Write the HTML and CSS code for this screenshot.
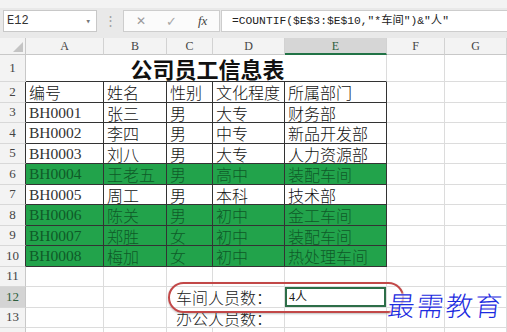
FILE: index.html
```html
<!DOCTYPE html>
<html lang="zh-CN">
  <head>
    <meta charset="UTF-8" />
    <title>公司员工信息表</title>
    <link rel="stylesheet" href="styles.css">
  </head>
  <body>
    <div class="toolbar">
      <div class="namebox"><span>E12</span><span class="arrow">▾</span></div>
      <div class="dots">⋮</div>
      <div class="fbtns"><span class="x">✕</span><span class="ok">✓</span><span class="fx">fx</span></div>
      <div class="formula">=COUNTIF($E$3:$E$10,"*车间")&amp;"人"</div>
    </div>

    <div class="sheet">
      <div class="corner"><svg width="10" height="10" viewBox="0 0 10 10"><path d="M10 0 L10 10 L0 10 Z" fill="#c4c4c4"/></svg></div>
      <div class="ch">A</div><div class="ch">B</div><div class="ch">C</div><div class="ch">D</div>
      <div class="ch on">E</div><div class="ch">F</div><div class="ch">G</div>

      <div class="rh">1</div><div class="c title">公司员工信息表</div><div class="c"></div><div class="c"></div>

      <div class="rh b">2</div><div class="c d">编号</div><div class="c d">姓名</div><div class="c d">性别</div><div class="c d">文化程度</div><div class="c d">所属部门</div><div class="c"></div><div class="c"></div>
      <div class="rh b">3</div><div class="c d lat">BH0001</div><div class="c d">张三</div><div class="c d">男</div><div class="c d">大专</div><div class="c d">财务部</div><div class="c"></div><div class="c"></div>
      <div class="rh b">4</div><div class="c d lat">BH0002</div><div class="c d">李四</div><div class="c d">男</div><div class="c d">中专</div><div class="c d">新品开发部</div><div class="c"></div><div class="c"></div>
      <div class="rh b">5</div><div class="c d lat">BH0003</div><div class="c d">刘八</div><div class="c d">男</div><div class="c d">大专</div><div class="c d">人力资源部</div><div class="c"></div><div class="c"></div>
      <div class="rh b">6</div><div class="c d g lat">BH0004</div><div class="c d g">王老五</div><div class="c d g">男</div><div class="c d g">高中</div><div class="c d g">装配车间</div><div class="c"></div><div class="c"></div>
      <div class="rh b">7</div><div class="c d lat">BH0005</div><div class="c d">周工</div><div class="c d">男</div><div class="c d">本科</div><div class="c d">技术部</div><div class="c"></div><div class="c"></div>
      <div class="rh b">8</div><div class="c d g lat">BH0006</div><div class="c d g">陈关</div><div class="c d g">男</div><div class="c d g">初中</div><div class="c d g">金工车间</div><div class="c"></div><div class="c"></div>
      <div class="rh b">9</div><div class="c d g lat">BH0007</div><div class="c d g">郑胜</div><div class="c d g">女</div><div class="c d g">初中</div><div class="c d g">装配车间</div><div class="c"></div><div class="c"></div>
      <div class="rh b">10</div><div class="c d g lat">BH0008</div><div class="c d g">梅加</div><div class="c d g">女</div><div class="c d g">初中</div><div class="c d g">热处理车间</div><div class="c"></div><div class="c"></div>

      <div class="rh">11</div><div class="c"></div><div class="c"></div><div class="c"></div><div class="c"></div><div class="c"></div><div class="c"></div><div class="c"></div>
      <div class="rh on">12</div><div class="c"></div><div class="c"></div><div class="c label">车间人员数：</div><div class="c sel">4人</div><div class="c"></div><div class="c"></div>
      <div class="rh">13</div><div class="c"></div><div class="c"></div><div class="c label">办公人员数：</div><div class="c"></div><div class="c"></div><div class="c"></div>
      <div class="rh"></div><div class="c"></div><div class="c"></div><div class="c"></div><div class="c"></div><div class="c"></div><div class="c"></div><div class="c"></div>

      <div class="ring"></div>
      <div class="mark">最需教育</div>
    </div>
  </body>
</html>
```

FILE: styles.css
```css
body {
  margin: 0;
  width: 507px;
  height: 332px;
  overflow: hidden;
  background: #ececec;
  font-family: "Liberation Serif", "Noto Sans CJK SC", serif;
  color: #1a1a1a;
}
.toolbar {
  height: 38px;
  box-sizing: border-box;
  padding-top: 10px;
  display: flex;
  align-items: flex-start;
  background: linear-gradient(#f3f3f3 0, #f3f3f3 8px, #e9e9e9 8px);
}
.namebox {
  margin-left: 3px;
  width: 94px;
  height: 22px;
  box-sizing: border-box;
  padding: 0 5px 0 3px;
  background: white;
  border: 1px solid #c8c8c8;
  display: flex;
  align-items: center;
  justify-content: space-between;
  font-family: "Liberation Mono", monospace;
  font-size: 12px;
  color: #333;
}
.namebox .arrow {
  font-size: 9px;
  color: #777;
}
.dots {
  width: 26px;
  height: 22px;
  line-height: 22px;
  text-align: center;
  color: #a0a0a0;
  font-size: 13px;
}
.fbtns {
  width: 97px;
  height: 22px;
  box-sizing: border-box;
  background: #fbfbfb;
  border: 1px solid #cdcdcd;
  display: flex;
  align-items: center;
  font-family: "DejaVu Sans", sans-serif;
  color: #9a9a9a;
}
.fbtns .x {
  margin-left: 12px;
  font-size: 12px;
}
.fbtns .ok {
  margin-left: 20px;
  font-size: 13px;
  color: #a8a8a8;
}
.fbtns .fx {
  margin-left: 21px;
  font-family: "Liberation Serif", serif;
  font-style: italic;
  font-size: 13px;
  color: #444;
}
.formula {
  flex: 1;
  margin-left: 1px;
  height: 22px;
  box-sizing: border-box;
  padding-left: 10px;
  line-height: 20px;
  background: white;
  border: 1px solid #cdcdcd;
  border-right: none;
  font-family: "Liberation Mono", "Noto Sans CJK SC", monospace;
  font-size: 11.3px;
  color: #222;
  white-space: nowrap;
}
.sheet {
  position: relative;
  display: grid;
  grid-template-columns: 26px 78px 63px 46px 72px 102px 58px 62px;
  grid-template-rows: 17px 27px repeat(13, 20.5px);
  background: white;
}
.sheet > div {
  box-sizing: border-box;
  min-width: 0;
}
.corner {
  background: #f3f3f3;
  border-right: 1px solid #c8c8c8;
  border-bottom: 1px solid #c8c8c8;
  display: flex;
  align-items: flex-end;
  justify-content: flex-end;
  padding: 0 2px 2px 0;
}
.ch {
  background: #f3f3f3;
  border-right: 1px solid #d2d2d2;
  border-bottom: 1px solid #c8c8c8;
  text-align: center;
  font-size: 12px;
  line-height: 16px;
  color: #444;
}
.ch.on {
  background: #d6d6d6;
  border-bottom: 2px solid #217346;
  color: #2f5f3f;
}
.rh {
  background: #f3f3f3;
  border-right: 1px solid #c8c8c8;
  border-bottom: 1px solid #d8d8d8;
  display: flex;
  align-items: center;
  justify-content: center;
  font-size: 13px;
  line-height: 14px;
  color: #444;
}
.rh.b {
  border-right-color: #333;
}
.rh.on {
  background: #d4d4d4;
  color: #2f5f3f;
}
.c {
  border-right: 1px solid #dcdcdc;
  border-bottom: 1px solid #dcdcdc;
  padding-left: 3px;
  font-size: 16px;
  line-height: 18px;
  padding-top: 1px;
  white-space: nowrap;
}
.title {
  grid-column: span 5;
  border-bottom-color: #333;
  text-align: center;
  font-family: "Noto Sans CJK SC", sans-serif;
  font-weight: bold;
  font-size: 22px;
  line-height: 25px;
  color: #111;
}
.d {
  border-right-color: #333;
  border-bottom-color: #333;
  font-family: "Noto Sans CJK SC", sans-serif;
  font-weight: 300;
  color: #111;
}
.d.lat {
  font-family: "Liberation Serif", serif;
  font-weight: normal;
  font-size: 15.5px;
  color: #333;
}
.g {
  background: #22a34b;
  color: #0f5a28;
}
.d.g.lat {
  color: #0f5a28;
}
.label {
  grid-column: span 2;
  padding-left: 9px;
  font-family: "Noto Sans CJK SC", sans-serif;
  font-weight: 300;
  color: #222;
}
.sel {
  box-shadow: inset 0 0 0 2px #2d6e48;
  font-size: 12px;
  line-height: 19px;
  padding-left: 4px;
}
.ring {
  position: absolute;
  left: 168px;
  top: 244px;
  width: 236px;
  height: 31px;
  box-sizing: border-box;
  border: 2px solid #c24848;
  border-radius: 16px;
  box-shadow: 0 1px 2px rgba(0,0,0,0.25);
}
.mark {
  position: absolute;
  left: 388px;
  top: 247px;
  font-family: "Noto Sans CJK SC", sans-serif;
  font-size: 27px;
  font-weight: 300;
  letter-spacing: 2px;
  color: #1c2be0;
  transform: skewX(-6deg);
  text-shadow: 0 0 2px white, 0 0 3px white, 1px 1px 2px white;
}
```
